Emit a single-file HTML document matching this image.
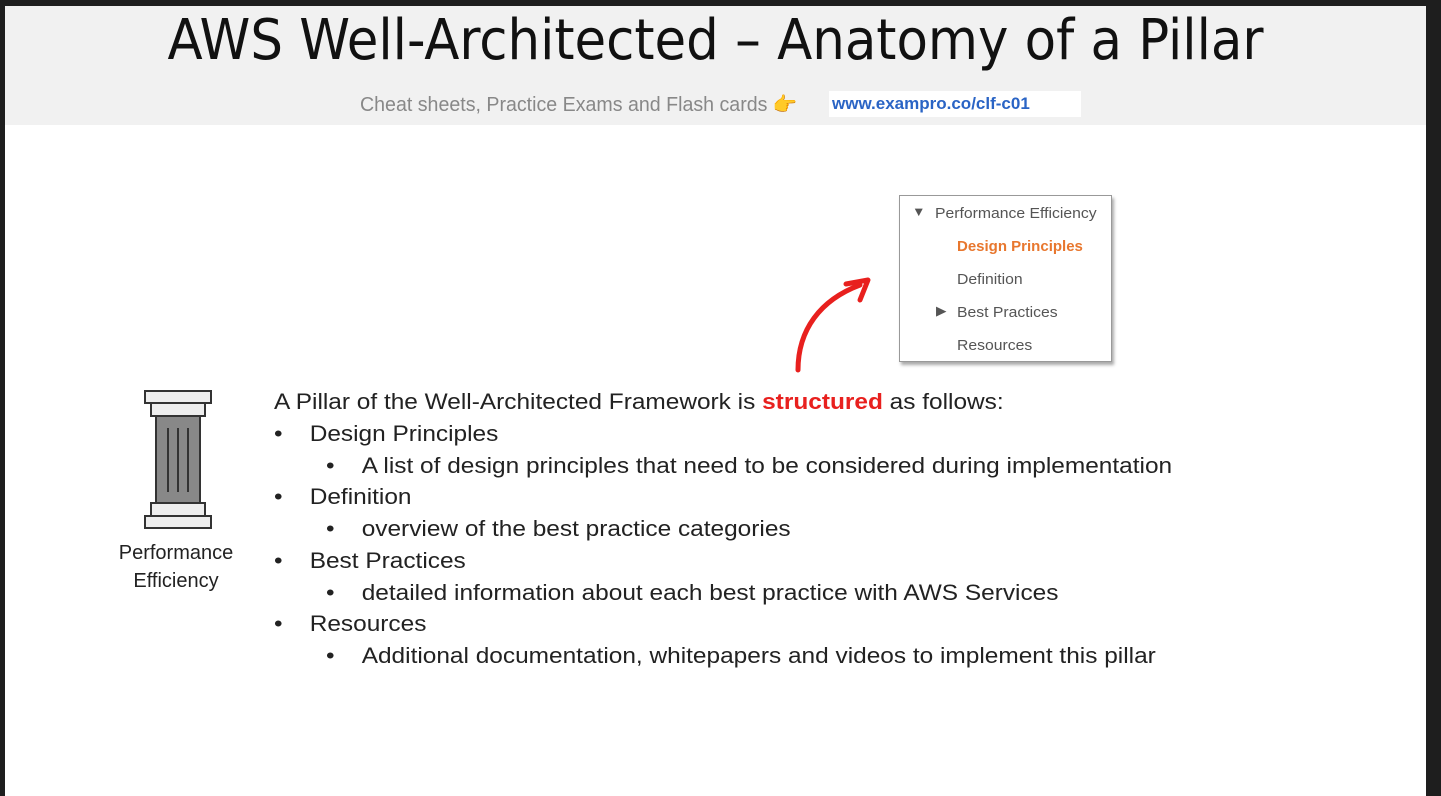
<!DOCTYPE html>
<html><head><meta charset="utf-8"><style>
body{margin:0;width:1441px;height:796px;background:#1e1e1e;position:relative;overflow:hidden;font-family:"Liberation Sans",sans-serif}
.slide{position:absolute;left:5px;top:6px;width:1421px;height:790px;background:#fff}
.head{position:absolute;left:0;top:0;width:1421px;height:119px;background:#f1f1f1}
.title{position:absolute;left:0;width:1421px;top:2px;text-align:center;font-family:"DejaVu Sans Condensed","Liberation Sans Narrow",sans-serif;font-size:56px;color:#111;transform:scaleX(1.02)}
.sub{position:absolute;left:355px;top:86px;font-size:20px;color:#888;transform-origin:left;transform:scaleX(0.98);white-space:nowrap}
.link{position:absolute;left:824px;top:85px;width:252px;height:26px;background:#fff}
.link span{position:absolute;left:3px;top:3px;font-size:17px;font-weight:bold;color:#2a64c5}
.t{position:absolute;font-family:"Liberation Sans","DejaVu Sans",sans-serif;font-size:22px;color:#222;white-space:nowrap;transform-origin:left;transform:scaleX(1.11)}
.box{position:absolute;left:899px;top:195px;width:211px;height:165px;border:1px solid #999;box-shadow:2px 3px 3px #aaa;background:#fff}
.b{position:absolute;font-size:15px;color:#555;white-space:nowrap;transform-origin:left;transform:scaleX(1.05)}
</style></head><body>
<div class="slide">
<div class="head">
<div class="title">AWS Well-Architected – Anatomy of a Pillar</div>
<div class="sub">Cheat sheets, Practice Exams and Flash cards 👉</div>
<div class="link"><span>www.exampro.co/clf-c01</span></div>
</div>
</div>
<div class="box">
<div class="b" style="left:12px;top:8px;font-size:13px">▼</div>
<div class="b" style="left:35px;top:9px">Performance Efficiency</div>
<div class="b" style="left:57px;top:42px;color:#e8772e;font-weight:bold;transform:scaleX(1.0)">Design Principles</div>
<div class="b" style="left:57px;top:75px">Definition</div>
<div class="b" style="left:36px;top:107px;font-size:13px">▶</div>
<div class="b" style="left:57px;top:108px">Best Practices</div>
<div class="b" style="left:57px;top:141px">Resources</div>
</div>
<svg style="position:absolute;left:780px;top:270px" width="100" height="110"><path d="M18 100 C18 60 40 30 80 15" stroke="#e8201e" stroke-width="5" fill="none" stroke-linecap="round"/><path d="M66 14 L88 10 L80 30" stroke="#e8201e" stroke-width="5" fill="none" stroke-linecap="round" stroke-linejoin="round"/></svg>
<svg style="position:absolute;left:140px;top:386px" width="80" height="148">
<g stroke="#333" stroke-width="2">
<rect x="5" y="5" width="66" height="12" fill="#eee"/>
<rect x="11" y="17" width="54" height="13" fill="#eee"/>
<rect x="16" y="30" width="44" height="87" fill="#888"/>
<rect x="11" y="117" width="54" height="13" fill="#eee"/>
<rect x="5" y="130" width="66" height="12" fill="#eee"/>
<line x1="28" y1="42" x2="28" y2="106"/><line x1="38" y1="42" x2="38" y2="106"/><line x1="48" y1="42" x2="48" y2="106"/>
</g></svg>
<div style="position:absolute;left:106px;top:539px;width:140px;text-align:center;font-size:20px;line-height:28px;color:#222">Performance<br>Efficiency</div>
<div class="t" style="left:274px;top:389px">A Pillar of the Well-Architected Framework is <b style="color:#e8201e">structured</b> as follows:</div>
<div class="t" style="left:274px;top:421px">•&nbsp;&nbsp;&nbsp;&nbsp;Design Principles</div>
<div class="t" style="left:326px;top:453px">•&nbsp;&nbsp;&nbsp;&nbsp;A list of design principles that need to be considered during implementation</div>
<div class="t" style="left:274px;top:484px">•&nbsp;&nbsp;&nbsp;&nbsp;Definition</div>
<div class="t" style="left:326px;top:516px">•&nbsp;&nbsp;&nbsp;&nbsp;overview of the best practice categories</div>
<div class="t" style="left:274px;top:548px">•&nbsp;&nbsp;&nbsp;&nbsp;Best Practices</div>
<div class="t" style="left:326px;top:580px">•&nbsp;&nbsp;&nbsp;&nbsp;detailed information about each best practice with AWS Services</div>
<div class="t" style="left:274px;top:611px">•&nbsp;&nbsp;&nbsp;&nbsp;Resources</div>
<div class="t" style="left:326px;top:643px">•&nbsp;&nbsp;&nbsp;&nbsp;Additional documentation, whitepapers and videos to implement this pillar</div>
</body></html>
